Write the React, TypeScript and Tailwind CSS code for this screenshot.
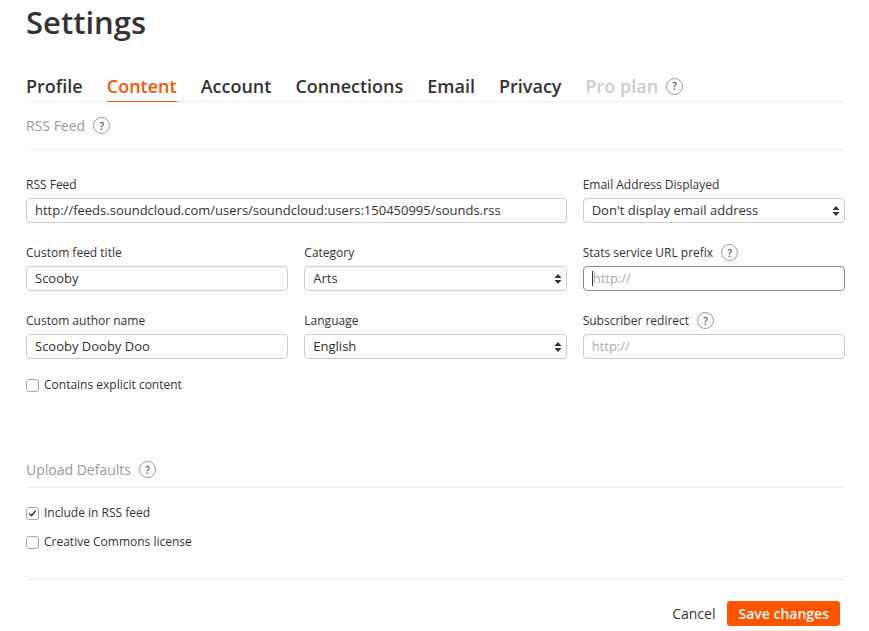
import { ChevronsUpDown } from "lucide-react";

const font = { fontFamily: '"Open Sans", "Liberation Sans", sans-serif' };

function Help() {
    return (
        <span className="inline-flex items-center justify-center w-[17px] h-[17px] rounded-full border border-[#999] text-[10px] font-semibold text-[#555] ml-2 leading-none">?</span>
    );
}

function Label({ children, help }: { children: React.ReactNode; help?: boolean }) {
    return (
        <div className="flex items-center h-[17px] text-[12px] text-[#333] mb-[5px]">
            {children}
            {help && <Help />}
        </div>
    );
}

function Input({ value, placeholder, focus }: { value?: string; placeholder?: string; focus?: boolean }) {
    return (
        <div className={`h-[25px] flex items-center px-[8px] rounded-[4px] border text-[13px] ${focus ? "border-[#888]" : "border-[#ccc]"} ${value ? "text-[#333]" : "text-[#aaa]"}`}>
            {focus && <span className="w-px h-[15px] bg-[#333]" />}
            {value ?? placeholder}
        </div>
    );
}

function Select({ value }: { value: string }) {
    return (
        <div className="h-[25px] flex items-center justify-between pl-[8px] pr-[4px] rounded-[4px] border border-[#ccc] text-[13px] text-[#333]">
            {value}
            <svg width="8" height="12" viewBox="0 0 8 12"><path d="M4 1 L7.5 5 H0.5Z M4 11 L7.5 7 H0.5Z" fill="#333" /></svg>
        </div>
    );
}

function Check({ checked, children }: { checked?: boolean; children: React.ReactNode }) {
    return (
        <div className="flex items-center gap-[5px] text-[12px] text-[#333]">
            <span className="w-[13px] h-[13px] rounded-[3px] border border-[#aaa] flex items-center justify-center bg-white">
                {checked && <svg width="9" height="9" viewBox="0 0 10 10"><path d="M1.5 5 L4 7.5 L8.5 2" stroke="#333" strokeWidth="1.6" fill="none" /></svg>}
            </span>
            {children}
        </div>
    );
}

export default function App() {
    const tabs = ["Profile", "Content", "Account", "Connections", "Email", "Privacy"];
    return (
        <div className="w-[869px] h-[631px] bg-white overflow-hidden" style={font}>
            <div className="ml-[26px] w-[819px]">
                <h1 className="text-[31px] font-semibold text-[#333] leading-none pt-[7px] h-[60px]">Settings</h1>
                <div className="flex items-end gap-[24px] border-b border-[#eee] h-[42px]">
                    {tabs.map((t) => (
                        <div key={t} className={`text-[18px] font-semibold pb-[3px] leading-[24px] ${t === "Content" ? "text-[#f50] border-b border-[#f50] -mb-px" : "text-[#333]"}`}>{t}</div>
                    ))}
                    <div className="text-[18px] font-semibold pb-[3px] leading-[24px] text-[#ccc] flex items-center">Pro plan<Help /></div>
                </div>
                <div className="flex items-center h-[48px] border-b border-[#eee] text-[14px] text-[#999]">RSS Feed<Help /></div>
                <div className="grid grid-cols-3 gap-x-[16px] gap-y-[21px] mt-[26px]">
                    <div className="col-span-2"><Label>RSS Feed</Label><Input value="http://feeds.soundcloud.com/users/soundcloud:users:150450995/sounds.rss" /></div>
                    <div><Label>Email Address Displayed</Label><Select value="Don't display email address" /></div>
                    <div><Label>Custom feed title</Label><Input value="Scooby" /></div>
                    <div><Label>Category</Label><Select value="Arts" /></div>
                    <div><Label help>Stats service URL prefix</Label><Input placeholder="http://" focus /></div>
                    <div><Label>Custom author name</Label><Input value="Scooby Dooby Doo" /></div>
                    <div><Label>Language</Label><Select value="English" /></div>
                    <div><Label help>Subscriber redirect</Label><Input placeholder="http://" /></div>
                </div>
                <div className="mt-[17px]"><Check>Contains explicit content</Check></div>
                <div className="flex items-center h-[36px] mt-[58px] border-b border-[#eee] text-[14px] text-[#999]">Upload Defaults<Help /></div>
                <div className="flex flex-col gap-[11px] mt-[16px]">
                    <Check checked>Include in RSS feed</Check>
                    <Check>Creative Commons license</Check>
                </div>
                <div className="border-t border-[#eee] mt-[28px] flex justify-end items-center gap-[12px] pt-[21px] pr-[5px]">
                    <span className="text-[14px] text-[#333]">Cancel</span>
                    <button className="h-[25px] px-[11px] rounded-[3px] bg-[#f50] text-white text-[14px] font-semibold">Save changes</button>
                </div>
            </div>
        </div>
    );
}
